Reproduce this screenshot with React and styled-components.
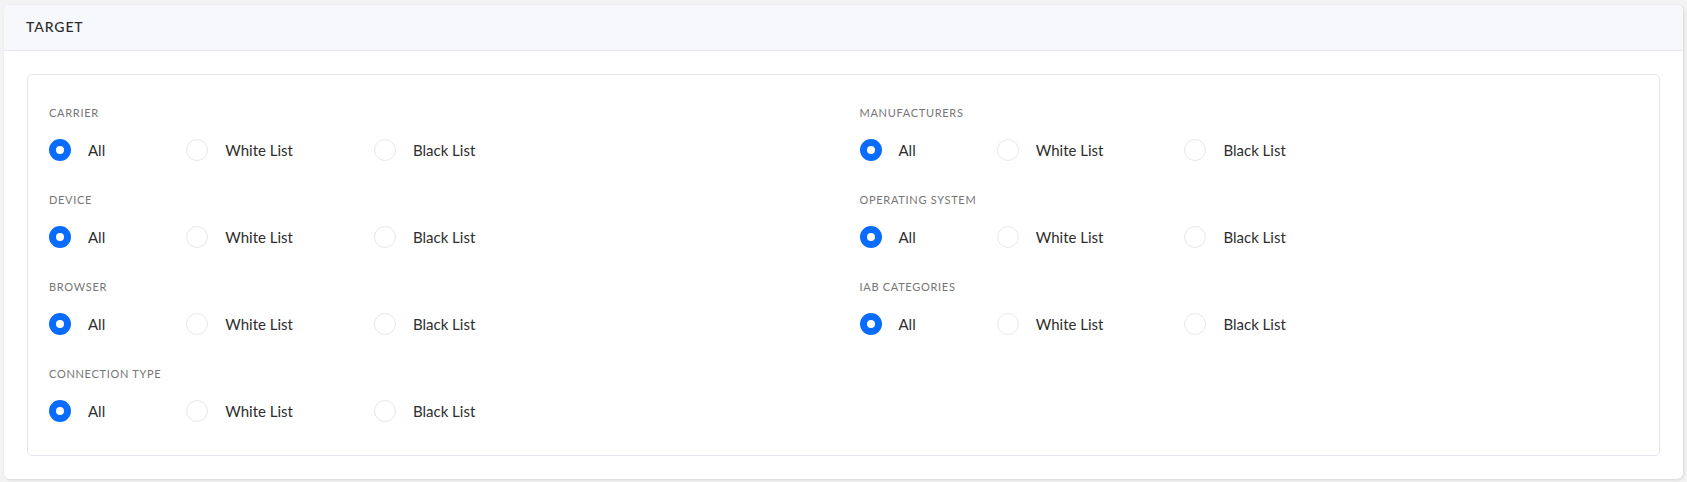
import React, { useState } from "react";
import styled, { createGlobalStyle } from "styled-components";

const GlobalStyle = createGlobalStyle`
  html, body {
    margin: 0;
    padding: 0;
    background: #f3f3f3;
    font-family: Lato, "Noto Sans", sans-serif;
  }
`;

const groups = [
  { key: "carrier", label: "Carrier" },
  { key: "manufacturers", label: "Manufacturers" },
  { key: "device", label: "Device" },
  { key: "os", label: "Operating System" },
  { key: "browser", label: "Browser" },
  { key: "iab", label: "IAB Categories" },
  { key: "connection", label: "Connection Type" },
];

const options = ["All", "White List", "Black List"];

const RadioOption = ({ name, value, checked, onChange }) => (
  <Option>
    <HiddenInput
      type="radio"
      name={name}
      checked={checked}
      onChange={() => onChange(value)}
    />
    <Circle checked={checked} />
    <OptionText>{value}</OptionText>
  </Option>
);

const App = () => {
  //selected option per group
  const [values, setValues] = useState(
    groups.reduce((acc, g) => ({ ...acc, [g.key]: "All" }), {})
  );

  const setValue = (key) => (value) =>
    setValues((prev) => ({ ...prev, [key]: value }));

  return (
    <>
      <GlobalStyle />
      <Page>
        <Card>
          <CardHeader>
            <Title>Target</Title>
          </CardHeader>
          <CardBody>
            <Panel>
              <Grid>
                {groups.map((group) => (
                  <Group key={group.key}>
                    <GroupLabel>{group.label}</GroupLabel>
                    <Options>
                      {options.map((opt) => (
                        <RadioOption
                          key={opt}
                          name={group.key}
                          value={opt}
                          checked={values[group.key] === opt}
                          onChange={setValue(group.key)}
                        />
                      ))}
                    </Options>
                  </Group>
                ))}
              </Grid>
            </Panel>
          </CardBody>
        </Card>
      </Page>
    </>
  );
};

const Page = styled.div`
  padding: 5px 4px 3px 4px;
`;

const Card = styled.div`
  background: #ffffff;
  border-radius: 6px;
  box-shadow: 1px 1px 3px rgba(0, 0, 0, 0.12);
  overflow: hidden;
`;

const CardHeader = styled.div`
  display: flex;
  align-items: center;
  height: 46px;
  padding: 0 22px;
  background: #f7f8fc;
  border-bottom: 1px solid #e6e4f2;
  box-sizing: border-box;
`;

const Title = styled.h3`
  margin: 0 0 2px 0;
  font-size: 14px;
  font-weight: 500;
  letter-spacing: 0.9px;
  text-transform: uppercase;
  color: #2b2b2b;
`;

const CardBody = styled.div`
  padding: 23px 23px 23px 23px;
`;

const Panel = styled.div`
  border: 1px solid #e6e4f2;
  border-radius: 5px;
  padding: 30px 21px 33px 21px;
`;

const Grid = styled.div`
  display: grid;
  grid-template-columns: 1fr 1fr;
  column-gap: 32px;
  row-gap: 31px;
`;

const Group = styled.div`
  display: flex;
  flex-direction: column;
`;

const GroupLabel = styled.div`
  font-size: 11px;
  line-height: 16px;
  letter-spacing: 0.7px;
  text-transform: uppercase;
  color: #767676;
  margin-bottom: 18px;
`;

const Options = styled.div`
  display: flex;
  align-items: center;
`;

const Option = styled.label`
  display: flex;
  align-items: center;
  margin-right: 81px;
  cursor: pointer;
`;

const HiddenInput = styled.input`
  display: none;
`;

const Circle = styled.span`
  width: 22px;
  height: 22px;
  box-sizing: border-box;
  border-radius: 50%;
  background: #ffffff;
  border: ${(p) => (p.checked ? "7px solid #0a6cff" : "1px solid #e8e8e8")};
  margin-right: 17px;
  flex-shrink: 0;
`;

const OptionText = styled.span`
  font-size: 15px;
  line-height: 22px;
  color: #2e2e2e;
`;

export default App;
